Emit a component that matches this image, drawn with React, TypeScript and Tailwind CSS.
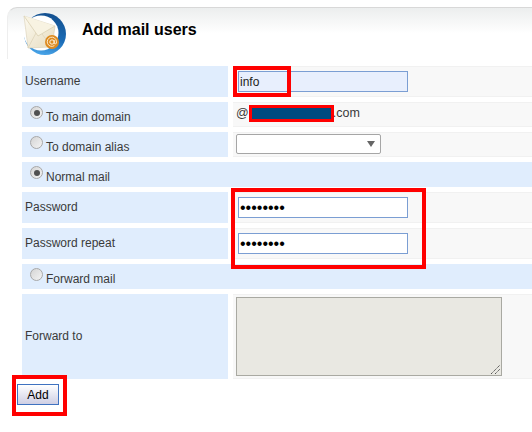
function MailIcon() {
  return (
    <svg width="46" height="46" viewBox="0 0 46 46" className="shrink-0">
      <defs>
        <linearGradient id="disc" x1="0.6" y1="0" x2="0.4" y2="1">
          <stop offset="0" stopColor="#14508f" />
          <stop offset="0.6" stopColor="#1b6db8" />
          <stop offset="1" stopColor="#4aa6ea" />
        </linearGradient>
        <linearGradient id="paper" x1="0" y1="0" x2="1" y2="1">
          <stop offset="0" stopColor="#fdfaf0" />
          <stop offset="1" stopColor="#e6dcc0" />
        </linearGradient>
      </defs>
      <circle cx="22" cy="21" r="21" fill="url(#disc)" />
      <circle cx="18" cy="20" r="17.5" fill="#ffffff" />
      <path d="M1 3 L32 13 L29 34 L5 35 Z" fill="url(#paper)" stroke="#d8cfb4" strokeWidth="0.6" />
      <path d="M1 3 L15 23 L32 13" fill="#f8f3e2" stroke="#d9cfb2" strokeWidth="0.8" />
      <path d="M5 35 L13 20 M29 34 L19 21" fill="none" stroke="#ddd3b8" strokeWidth="0.8" />
      <circle cx="29" cy="29" r="7" fill="#dd8a1f" />
      <circle cx="29" cy="29" r="2.2" fill="none" stroke="#fff3dc" strokeWidth="1" />
      <path d="M31.2 27 v3 q0 1.2 1.4 1 q1.2 -0.6 0.8 -2.8 a4.6 4.6 0 1 0 -2 4.4" fill="none" stroke="#fff3dc" strokeWidth="0.9" />
    </svg>
  );
}

function Radio({ checked }: { checked?: boolean }) {
  return (
    <span className="flex h-[13px] w-[13px] shrink-0 items-center justify-center rounded-full border border-[#a8a8a8] bg-gradient-to-br from-[#d4d4d4] to-[#f4f4f4]">
      {checked && <span className="h-[6px] w-[6px] rounded-full bg-[#505050]" />}
    </span>
  );
}

function LabelCell({ children, className }: { children: React.ReactNode; className: string }) {
  return <div className={`flex w-[206px] shrink-0 items-center bg-[#e0edfd] ${className}`}>{children}</div>;
}

function ValueCell({ children, className }: { children?: React.ReactNode; className?: string }) {
  return (
    <div className={`flex flex-1 items-center border-y border-[#f1f1f1] bg-[#f8f8f8] ${className ?? ''}`}>
      {children}
    </div>
  );
}

function RadioLabel({ checked, text }: { checked?: boolean; text: string }) {
  return (
    <div className="flex items-center pl-[8px]">
      <span className="-mt-[4px]">
        <Radio checked={checked} />
      </span>
      <span className="ml-[3px] mt-[4px]">{text}</span>
    </div>
  );
}

function PasswordRow({ label }: { label: string }) {
  return (
    <div className="flex gap-[5px]">
      <LabelCell className="h-[31px] pb-[1px] pl-[3px]">{label}</LabelCell>
      <ValueCell className="pl-[5px]">
        <div className="flex h-[21px] w-[170px] items-center border border-[#7b9ed3] bg-white pl-[1px] text-black">
          <span className="text-[16px] leading-none">••••••••</span>
        </div>
      </ValueCell>
    </div>
  );
}

export default function App() {
  return (
    <div
      className="relative h-[432px] w-[532px] overflow-hidden bg-white text-[12px] text-[#3a3a3a]"
      style={{ fontFamily: '"Liberation Sans", Arial, sans-serif' }}
    >
      {/* Header */}
      <div className="pl-[7px] pt-[7px]">
        <div className="flex h-[52px] items-start rounded-tl-[10px] border-l border-t border-l-[#eeeeee] border-t-[#d8d8d8] bg-gradient-to-b from-[#eceeee] via-white to-white pl-[15px] pt-[5px]">
          <MailIcon />
          <h1 className="ml-[13px] mt-[7px] text-[16px] font-bold leading-[20px] text-black">Add mail users</h1>
        </div>
      </div>

      {/* Form */}
      <div className="flex flex-col gap-[5px] pl-[22px] pt-[7px]">
        <div className="flex gap-[5px]">
          <LabelCell className="h-[31px] pb-[1px] pl-[3px]">Username</LabelCell>
          <ValueCell className="pl-[5px]">
            <div className="flex h-[21px] w-[170px] items-center border border-[#7b9ed3] bg-[#e8effd] pl-[1px] text-[12px] text-[#222]">
              info
            </div>
          </ValueCell>
        </div>

        <div className="flex gap-[5px]">
          <LabelCell className="h-[25px]">
            <RadioLabel checked text="To main domain" />
          </LabelCell>
          <ValueCell className="pl-[3px] text-[12.5px]">
            <span className="-mt-[2px]">@</span>
            <span className="w-[84px] shrink-0" />
            <span className="-mt-[2px]">.com</span>
          </ValueCell>
        </div>

        <div className="flex gap-[5px]">
          <LabelCell className="h-[25px]">
            <RadioLabel text="To domain alias" />
          </LabelCell>
          <ValueCell className="pl-[3px]">
            <div className="-mt-[1px] flex h-[20px] w-[145px] items-center justify-end rounded-[2px] border border-[#a6a6a6] bg-white pr-[5px]">
              <span className="h-0 w-0 border-x-[4px] border-t-[6px] border-x-transparent border-t-[#666]" />
            </div>
          </ValueCell>
        </div>

        <div className="flex h-[25px] items-center bg-[#e0edfd]">
          <RadioLabel checked text="Normal mail" />
        </div>

        <PasswordRow label="Password" />
        <PasswordRow label="Password repeat" />

        <div className="flex h-[25px] items-center bg-[#e0edfd]">
          <RadioLabel text="Forward mail" />
        </div>

        <div className="flex gap-[5px]">
          <LabelCell className="h-[85px] pb-[2px] pl-[3px]">Forward to</LabelCell>
          <ValueCell className="pl-[3px]">
            <div className="relative -mt-[1px] h-[79px] w-[266px] border border-[#a9a9a2] bg-[#e9e8e2]">
              <svg width="11" height="11" viewBox="0 0 11 11" className="absolute bottom-0 right-0">
                <path d="M1 10 L10 1 M5 10 L10 5" stroke="#555" strokeWidth="1" strokeDasharray="1.4 0.6" />
              </svg>
            </div>
          </ValueCell>
        </div>
      </div>

      <div className="pl-[17px] pt-[5px]">
        <button className="h-[21px] w-[42px] border border-[#3f72c0] bg-gradient-to-b from-white to-[#cfcfe4] text-[12px] text-black">
          Add
        </button>
      </div>

      {/* Annotation boxes drawn on top of the screenshot */}
      <div className="absolute left-[233px] top-[66px] h-[31px] w-[58px] border-4 border-[#ff0000]" />
      <div className="absolute left-[249px] top-[105px] h-[17px] w-[85px] border-[3px] border-[#ff0000] bg-[#004a80]" />
      <div className="absolute left-[231px] top-[188px] h-[81px] w-[195px] border-4 border-[#ff0000]" />
      <div className="absolute left-[12px] top-[375px] h-[41px] w-[55px] border-4 border-[#ff0000]" />
    </div>
  );
}
